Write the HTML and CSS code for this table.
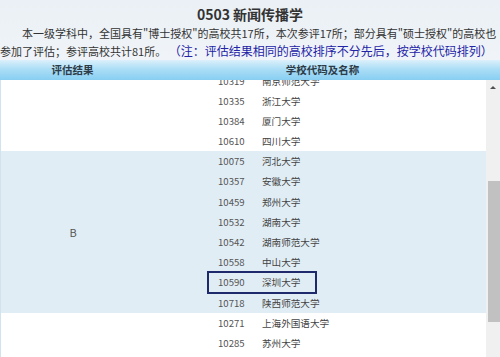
FILE: index.html
```html
<!DOCTYPE html>
<html lang="zh-CN">
<head>
    <meta charset="UTF-8">
    <meta name="viewport" content="width=device-width, initial-scale=1.0">
    <title>0503 新闻传播学</title>
    <link rel="stylesheet" href="styles.css">
</head>
<body>
    <div class="intro">
        <h1>0503 新闻传播学</h1>
        <p class="summary">
            <span class="line first">本一级学科中，全国具有"博士授权"的高校共17所，本次参评17所；部分具有"硕士授权"的高校也</span>
            <span class="line">参加了评估；参评高校共计81所。 <span class="note">（注：评估结果相同的高校排序不分先后，按学校代码排列）</span></span>
        </p>
    </div>

    <div class="table-head">
        <div>评估结果</div>
        <div>学校代码及名称</div>
    </div>

    <div class="table-body">
        <div class="groups">
            <div class="group">
                <div class="grade"></div>
                <div class="rows">
                    <div class="row"><span class="code">10319</span><span>南京师范大学</span></div>
                    <div class="row"><span class="code">10335</span><span>浙江大学</span></div>
                    <div class="row"><span class="code">10384</span><span>厦门大学</span></div>
                    <div class="row"><span class="code">10610</span><span>四川大学</span></div>
                </div>
            </div>
            <div class="group shaded">
                <div class="grade">B</div>
                <div class="rows">
                    <div class="row"><span class="code">10075</span><span>河北大学</span></div>
                    <div class="row"><span class="code">10357</span><span>安徽大学</span></div>
                    <div class="row"><span class="code">10459</span><span>郑州大学</span></div>
                    <div class="row"><span class="code">10532</span><span>湖南大学</span></div>
                    <div class="row"><span class="code">10542</span><span>湖南师范大学</span></div>
                    <div class="row"><span class="code">10558</span><span>中山大学</span></div>
                    <div class="row marked"><span class="code">10590</span><span>深圳大学</span><span class="mark-box"></span></div>
                    <div class="row"><span class="code">10718</span><span>陕西师范大学</span></div>
                </div>
            </div>
            <div class="group">
                <div class="grade"></div>
                <div class="rows">
                    <div class="row"><span class="code">10271</span><span>上海外国语大学</span></div>
                    <div class="row"><span class="code">10285</span><span>苏州大学</span></div>
                </div>
            </div>
        </div>
        <div class="scrollbar">
            <div class="arrow-up"></div>
            <div class="thumb"></div>
        </div>
    </div>
</body>
</html>
```

FILE: styles.css
```css
html, body {
    margin: 0;
    height: 357px;
    overflow: hidden;
}

body {
    font-family: "Noto Sans CJK SC", "Noto Sans", sans-serif;
    color: #444;
    background: #fff;
    display: flex;
    flex-direction: column;
}

.intro {
    background: linear-gradient(#eaf0f5, #f0f4f8);
    padding-top: 4px;
}

h1 {
    margin: 0;
    text-align: center;
    font-size: 14px;
    line-height: 20px;
    font-weight: bold;
    color: #333;
}

.summary {
    margin: 0;
    font-size: 11px;
    line-height: 18px;
    color: #333;
    white-space: nowrap;
}

.summary .line {
    display: block;
}

.summary .first {
    text-indent: 22px;
}

.note {
    font-size: 12px;
    color: #2323a6;
}

.table-head {
    display: grid;
    grid-template-columns: 145px 1fr;
    height: 20px;
    line-height: 19px;
    font-size: 10.5px;
    font-weight: bold;
    color: #2d3b48;
    text-align: center;
    background: linear-gradient(#dcf0fb, #acdef6 45%, #88cef2);
}

.table-body {
    flex: 1;
    display: flex;
    overflow: hidden;
    border-left: 1px solid #d3e3ee;
}

.groups {
    flex: 1;
    overflow: hidden;
}

.group {
    display: grid;
    grid-template-columns: 144px 1fr;
}

.group:first-child {
    margin-top: -9.5px;
}

.shaded {
    background: #e1edf5;
}

.grade {
    display: flex;
    align-items: center;
    justify-content: center;
    font-size: 11px;
    color: #555;
}

.row {
    display: flex;
    height: 20.2px;
    line-height: 20px;
    font-size: 9.6px;
    padding-left: 73px;
    color: #444;
}

.row .code {
    width: 44px;
    color: #555;
}

.marked {
    position: relative;
}

/* frame drawn over the 深圳大学 row */
.mark-box {
    position: absolute;
    left: 62px;
    top: -1px;
    width: 106px;
    height: 19px;
    border: 2px solid #1f2a6d;
}

.scrollbar {
    width: 14px;
    background: #f0f0f0;
    display: flex;
    flex-direction: column;
    align-items: flex-end;
}

.arrow-up {
    width: 0;
    height: 0;
    margin: 6px 4px 7px 0;
    border-left: 3px solid transparent;
    border-right: 3px solid transparent;
    border-bottom: 3px solid #505050;
}

.thumb {
    width: 12px;
    height: 141px;
    margin-top: 85px;
    background: #c1c1c1;
}
```
